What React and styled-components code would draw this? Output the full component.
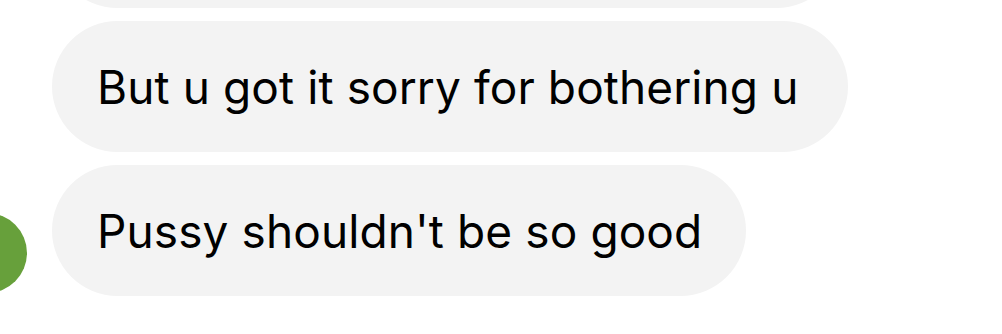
import React from 'react';
import styled, { createGlobalStyle } from 'styled-components';

const GlobalStyle = createGlobalStyle`
  html, body {
    margin: 0;
    padding: 0;
    background: #ffffff;
  }
  body {
    font-family: Inter, "Noto Sans", "Liberation Sans", sans-serif;
    -webkit-font-smoothing: antialiased;
  }
`

const Thread = styled.div`
  width: 1002px;
  height: 334px;
  overflow: hidden;
  display: flex;
  flex-direction: column;
  justify-content: flex-end;
  gap: 13px;
  padding-bottom: 38px;
  box-sizing: border-box;
  background: #ffffff;
`

const Row = styled.div`
  display: flex;
  align-items: flex-end;
  padding-left: ${p => (p.$avatar ? '0' : '52px')};
`

const Avatar = styled.div`
  flex: none;
  width: 80px;
  height: 80px;
  border-radius: 50%;
  background: #67a03b;
  margin-left: -53px;
  margin-right: 25px;
  margin-bottom: 3px;
`

const Bubble = styled.div`
  box-sizing: border-box;
  height: 131px;
  padding: 0 0 0 45px;
  border-radius: 66px;
  background: #f3f3f3;
  color: #000000;
  display: flex;
  align-items: center;
  font-size: 46px;
  letter-spacing: 0.1px;
  white-space: nowrap;
  width: ${p => p.$width}px;
`

const messages = [
  { text: '', width: 790 },
  { text: 'But u got it sorry for bothering u', width: 796 },
  { text: "Pussy shouldn't be so good", width: 694, avatar: true },
]

export default function App() {
  return (
    <>
      <GlobalStyle />
      <Thread>
        {messages.map((m, i) => (
          <Row key={i} $avatar={m.avatar}>
            {m.avatar && <Avatar />}
            <Bubble $width={m.width}>{m.text}</Bubble>
          </Row>
        ))}
      </Thread>
    </>
  );
}
